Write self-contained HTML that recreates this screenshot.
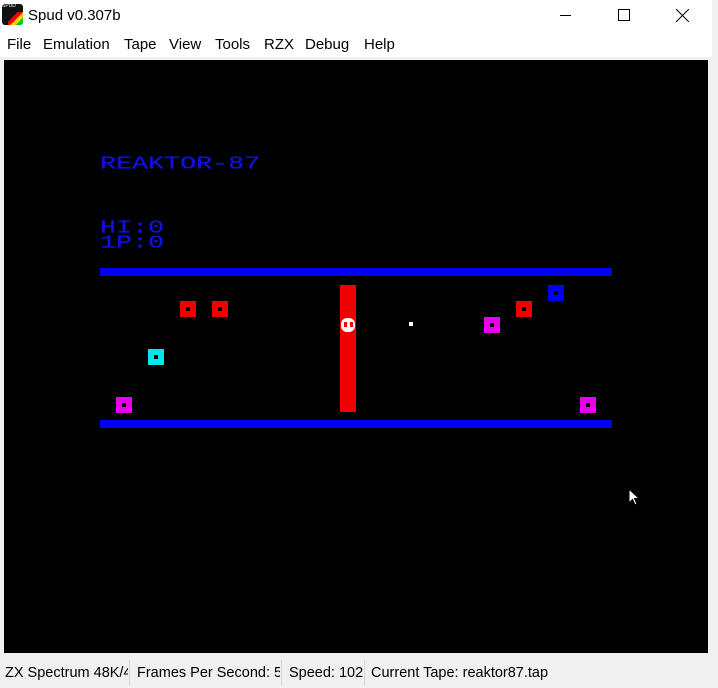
<!DOCTYPE html>
<html><head><meta charset="utf-8"><style>
*{margin:0;padding:0;box-sizing:border-box}
body{width:718px;height:688px;background:#f0f0f0;position:relative;overflow:hidden;font-family:"Liberation Sans",sans-serif}
.a{position:absolute}
.title{left:0;top:0;width:712px;height:30px;background:#fff}
.menu{left:0;top:30px;width:712px;height:27px;background:#fff;font-size:15px;color:#000}
.menu span{position:absolute;top:6px}
.scr{left:4px;top:60px;width:704px;height:593px;background:#000}
.b{position:absolute;width:16px;height:16px}
.b::after{content:"";position:absolute;left:6px;top:6px;width:4px;height:4px;background:#000}
.zx{position:absolute;font-family:"Liberation Mono",monospace;color:#1010d8;font-size:26.7px;line-height:1;transform-origin:0 0;transform:scaleY(0.7);letter-spacing:0;-webkit-text-stroke:0.5px #1010d8}
.sb{top:656px;height:32px;font-size:14.5px;color:#000}
.sb span{position:absolute;top:9px;white-space:nowrap;overflow:hidden}
.sep{position:absolute;top:660px;width:1px;height:26px;background:#d8d8d8}
</style></head><body>
<div class="a title">
 <div class="a" style="left:2px;top:4px;width:21px;height:21px;background:#111;border-radius:3px;overflow:hidden">
  <div class="a" style="left:0;top:0;width:21px;height:5px;font-size:5px;color:#fff;line-height:5px">SPUD</div>
  <div class="a" style="left:6px;top:8px;width:24px;height:14px;background:linear-gradient(135deg,#111 0 25%,#e00 25% 40%,#fc0 40% 55%,#0c0 55% 70%,#0cf 70% 85%,#111 85%)"></div>
 </div>
 <div class="a" style="left:28px;top:7px;font-size:15px">Spud v0.307b</div>
 <div class="a" style="left:560px;top:15px;width:11px;height:1px;background:#000"></div>
 <div class="a" style="left:618px;top:9px;width:12px;height:12px;border:1px solid #000"></div>
 <svg class="a" style="left:676px;top:9px" width="13" height="13"><path d="M0 0L13 13M13 0L0 13" stroke="#000" stroke-width="1"/></svg>
</div>
<div class="a menu">
 <span style="left:7px">File</span><span style="left:43px">Emulation</span><span style="left:124px">Tape</span><span style="left:169px">View</span><span style="left:215px">Tools</span><span style="left:264px">RZX</span><span style="left:305px">Debug</span><span style="left:364px">Help</span>
</div>
<div class="a scr"></div>
<div class="zx" style="left:100px;top:155px">REAKTOR-87</div>
<div class="zx" style="left:100px;top:219px">HI:0</div>
<div class="zx" style="left:100px;top:234px">1P:0</div>
<div class="a" style="left:100px;top:268px;width:512px;height:8px;background:#0000f0"></div>
<div class="a" style="left:100px;top:420px;width:512px;height:8px;background:#0000f0"></div>
<div class="a" style="left:340px;top:285px;width:16px;height:127px;background:#f00000"></div>
<div class="a" style="left:341px;top:318px;width:14px;height:14px;background:#fff;border-radius:6px"></div>
<div class="a" style="left:344px;top:322px;width:3px;height:5px;background:#f00"></div>
<div class="a" style="left:350px;top:322px;width:3px;height:5px;background:#f00"></div>
<div class="a" style="left:409px;top:322px;width:4px;height:4px;background:#fff"></div>
<div class="b" style="left:180px;top:301px;background:#f00000"></div>
<div class="b" style="left:212px;top:301px;background:#f00000"></div>
<div class="b" style="left:148px;top:349px;background:#00e8e8"></div>
<div class="b" style="left:116px;top:397px;background:#e800e8"></div>
<div class="b" style="left:484px;top:317px;background:#e800e8"></div>
<div class="b" style="left:516px;top:301px;background:#f00000"></div>
<div class="b" style="left:548px;top:285px;background:#0000f0"></div>
<div class="b" style="left:580px;top:397px;background:#e800e8"></div>
<svg class="a" style="left:628px;top:488px" width="14" height="20"><path d="M1 1L1 15L4.5 11.5L7 17L9 16L6.5 10.5L11 10.5Z" fill="#fff" stroke="#000" stroke-width="1"/></svg>
<div class="a sb" style="left:0;width:718px">
 <span style="left:5px;width:123px">ZX Spectrum 48K/48K</span>
 <span style="left:137px;width:143px">Frames Per Second: 51</span>
 <span style="left:289px;width:74px">Speed: 102%</span>
 <span style="left:371px">Current Tape: reaktor87.tap</span>
</div>
<div class="sep" style="left:129px"></div><div class="sep" style="left:281px"></div><div class="sep" style="left:364px"></div>
</body></html>
